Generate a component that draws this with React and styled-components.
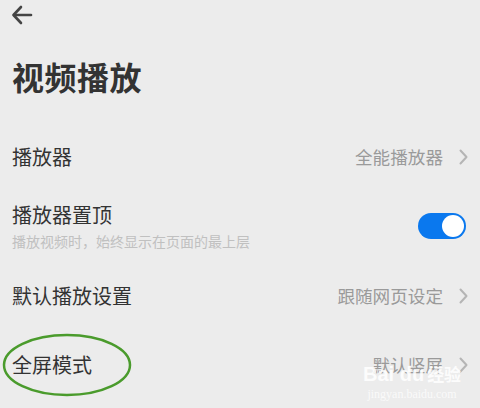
import React, { useState } from 'react';
import styled, { createGlobalStyle } from 'styled-components';

const GlobalStyle = createGlobalStyle`
    html, body {
        margin: 0;
        padding: 0;
        background: #ececec;
    }
    body {
        font-family: 'Noto Sans CJK SC', 'Noto Sans', sans-serif;
        color: #333333;
    }
`;

const Page = styled.div`
    position: relative;
    width: 480px;
    height: 408px;
    overflow: hidden;
    background: #ececec;
`;

const Header = styled.div`
    height: 30px;
    display: flex;
    align-items: center;
    padding-left: 11px;
`;

const Title = styled.h1`
    margin: 0;
    padding: 0 12px;
    height: 92px;
    display: flex;
    align-items: center;
    font-size: 32px;
    font-weight: 700;
    letter-spacing: 0.5px;
    color: #333333;
`;

const Row = styled.div`
    height: ${({tall}) => (tall ? '70px' : '69px')};
    display: flex;
    align-items: center;
    justify-content: space-between;
    padding: 0 12px;
`;

const Labels = styled.div`
    display: flex;
    flex-direction: column;
`;

const Label = styled.div`
    font-size: 20px;
    line-height: 28px;
    color: #333333;
`;

const Hint = styled.div`
    font-size: 14px;
    line-height: 20px;
    margin-top: 2px;
    color: #c0c0c0;
`;

const Value = styled.div`
    display: flex;
    align-items: center;
    gap: 16px;
    font-size: 17.6px;
    color: #9a9a9a;
`;

const Toggle = styled.button`
    width: 48px;
    height: 26px;
    margin-right: 2px;
    border: none;
    border-radius: 13px;
    padding: 2px;
    display: flex;
    justify-content: ${({on}) => (on ? 'flex-end' : 'flex-start')};
    background: ${({on}) => (on ? '#0a78ee' : '#c9c9c9')};
    cursor: pointer;
`;

const Knob = styled.span`
    width: 22px;
    height: 22px;
    border-radius: 50%;
    background: #ffffff;
`;

const Mark = styled.svg`
    position: absolute;
    left: 2px;
    top: 332px;
    pointer-events: none;
`;

const Watermark = styled.div`
    position: absolute;
    left: 363px;
    top: 363px;
    display: flex;
    flex-direction: column;
    align-items: center;
    color: rgba(255, 255, 255, 0.85);
    pointer-events: none;
`;

const Brand = styled.div`
    font-family: 'Liberation Sans', sans-serif;
    font-size: 20px;
    font-weight: 700;
    line-height: 22px;
    display: flex;
    align-items: center;
    gap: 1px;
    span {
        font-family: 'Noto Sans CJK SC', sans-serif;
        font-size: 17px;
        font-weight: 700;
        margin-left: 2px;
    }
`;

const Site = styled.div`
    font-family: 'Liberation Serif', serif;
    font-size: 12px;
    line-height: 14px;
    margin-top: 2px;
    color: rgba(255, 255, 255, 0.75);
`;

const Back = () => (
    <svg width="22" height="22" viewBox="0 0 22 22" fill="none" stroke="#444" strokeWidth="2.6" strokeLinecap="round" strokeLinejoin="round">
        <path d="M20 11H3" />
        <path d="M10 3L2.5 11L10 19" />
    </svg>
);

const Chevron = () => (
    <svg width="9" height="16" viewBox="0 0 9 16" fill="none" stroke="#b5b5b5" strokeWidth="2" strokeLinecap="round" strokeLinejoin="round">
        <path d="M1.5 1.5L7.5 8L1.5 14.5" />
    </svg>
);

function App() {
    const [onTop, setOnTop] = useState(true);

    return (
        <>
            <GlobalStyle />
            <Page>
                <Header>
                    <Back />
                </Header>
                <Title>视频播放</Title>
                <Row>
                    <Label>播放器</Label>
                    <Value>全能播放器<Chevron /></Value>
                </Row>
                <Row tall>
                    <Labels>
                        <Label>播放器置顶</Label>
                        <Hint>播放视频时，始终显示在页面的最上层</Hint>
                    </Labels>
                    <Toggle on={onTop ? 1 : 0} onClick={() => setOnTop(!onTop)}>
                        <Knob />
                    </Toggle>
                </Row>
                <Row>
                    <Label>默认播放设置</Label>
                    <Value>跟随网页设定<Chevron /></Value>
                </Row>
                <Row>
                    <Label>全屏模式</Label>
                    <Value>默认竖屏<Chevron /></Value>
                </Row>
                <Mark width="132" height="66" viewBox="0 0 132 66">
                    <ellipse cx="65" cy="33" rx="63" ry="30" fill="none" stroke="#4a9b2c" strokeWidth="2.5" />
                </Mark>
                <Watermark>
                    <Brand>Bai du<span>经验</span></Brand>
                    <Site>jingyan.baidu.com</Site>
                </Watermark>
            </Page>
        </>
    );
}

export default App;
